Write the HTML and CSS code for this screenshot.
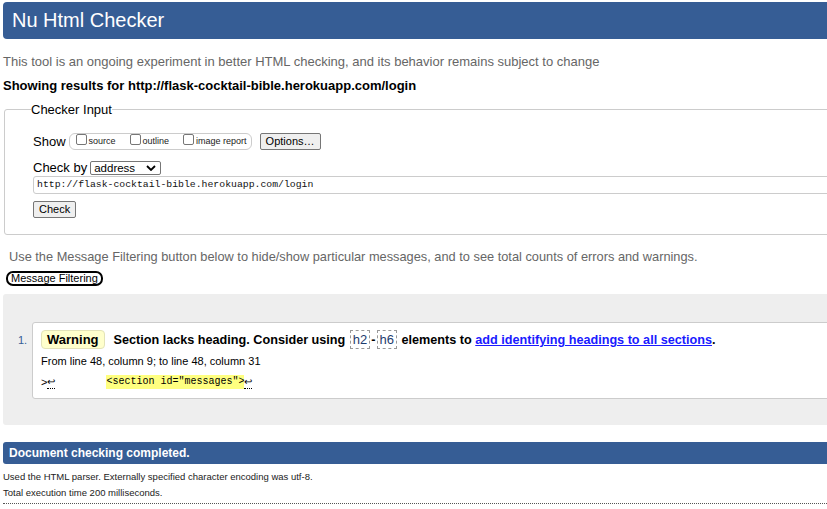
FILE: index.html
```html
<!DOCTYPE html>
<html>
<head>
<meta charset="utf-8">
<title>Nu Html Checker</title>
<link rel="stylesheet" href="styles.css">
</head>
<body>
<div class="page">
  <h1 class="title">Nu Html Checker</h1>
  <p class="intro">This tool is an ongoing experiment in better HTML checking, and its behavior remains subject to change</p>
  <p class="showing">Showing results for http://flask-cocktail-bible.herokuapp.com/login</p>

  <fieldset class="checker">
    <legend>Checker Input</legend>
    <div class="row show-row">
      <span class="lbl">Show</span>
      <span class="pill">
        <label class="opt"><span class="cb"></span>source</label>
        <label class="opt"><span class="cb"></span>outline</label>
        <label class="opt"><span class="cb"></span>image report</label>
      </span>
      <span class="btn options">Options…</span>
    </div>
    <div class="row by-row">
      <span class="lbl">Check by</span>
      <span class="select">address
        <svg class="chev" width="10" height="6" viewBox="0 0 10 6"><path d="M1 1 L5 5 L9 1" fill="none" stroke="#000" stroke-width="1.8"/></svg>
      </span>
    </div>
    <div class="url">http://flask-cocktail-bible.herokuapp.com/login</div>
    <span class="btn check">Check</span>
  </fieldset>

  <p class="filter-note">Use the Message Filtering button below to hide/show particular messages, and to see total counts of errors and warnings.</p>
  <span class="filter-btn">Message Filtering</span>

  <div class="results">
    <ol class="msgs">
      <li class="msg">
        <span class="num">1.</span>
        <div class="box">
          <p class="headline"><span class="badge">Warning</span><span class="mtext">Section lacks heading. Consider using <code class="el">h2</code>-<code class="el">h6</code> elements to <a href="#">add identifying headings to all sections</a>.</span></p>
          <p class="loc">From line 48, column 9; to line 48, column 31</p>
          <p class="extract"><span class="ch">&gt;<span class="lf">↩</span></span><span class="gap"></span><code class="hl">&lt;section id="messages"&gt;</code><span class="lf">↩</span></p>
        </div>
      </li>
    </ol>
  </div>

  <h2 class="done">Document checking completed.</h2>
  <p class="stat first">Used the HTML parser. Externally specified character encoding was utf-8.</p>
  <p class="stat">Total execution time 200 milliseconds.</p>
  <div class="dots"></div>
</div>
</body>
</html>
```

FILE: styles.css
```css
html, body {
  margin: 0;
  padding: 0;
  overflow: hidden;
  background: #fff;
}
body {
  font-family: "Liberation Sans", Arial, sans-serif;
  color: #000;
}
.page {
  width: 880px;
  padding-left: 3px;
}
.title {
  margin: 2px 0 0 0;
  height: 37px;
  line-height: 37px;
  padding-left: 9px;
  background: #365d95;
  color: #fff;
  font-size: 20px;
  font-weight: normal;
  border-radius: 4px 0 0 4px;
}
.intro {
  margin: 14px 0 0 0;
  font-size: 13px;
  line-height: 17px;
  color: #666;
}
.showing {
  margin: 7px 0 0 0;
  font-size: 13px;
  line-height: 17px;
  font-weight: bold;
}
.checker {
  margin: 7px 0 0 1px;
  padding: 14px 0 16px 28px;
  border: 1px solid #ccc;
  border-radius: 3px;
  font-size: 13px;
}
.checker legend {
  padding: 0;
  margin-left: -2px;
  font-size: 13px;
  line-height: 17px;
}
.row {
  display: flex;
  align-items: center;
}
.show-row {
  height: 18px;
}
.lbl {
  font-size: 13px;
}
.pill {
  display: inline-flex;
  align-items: center;
  margin-left: 3px;
  height: 15px;
  padding: 0 4px 0 6px;
  border: 1px solid #ccc;
  border-radius: 6px;
}
.opt {
  display: inline-flex;
  align-items: center;
  font-size: 9px;
  color: #222;
}
.opt + .opt { margin-left: 14px; }
.cb {
  display: inline-block;
  width: 9px;
  height: 9px;
  border: 1px solid #767676;
  border-radius: 2px;
  margin-right: 2px;
  margin-top: -3px;
}
.btn {
  display: inline-block;
  background: #efefef;
  border: 1px solid #767676;
  border-radius: 2px;
  font-size: 11px;
  color: #000;
  box-sizing: border-box;
}
.options {
  margin-left: 8px;
  height: 17px;
  line-height: 15px;
  padding: 0 5px;
}
.by-row {
  margin-top: 10px;
  height: 15px;
}
.select {
  display: inline-flex;
  align-items: center;
  justify-content: space-between;
  box-sizing: border-box;
  width: 71px;
  height: 14px;
  margin-left: 3px;
  padding: 0 4px 0 3px;
  border: 1px solid #767676;
  border-radius: 2px;
  font-size: 11.5px;
}
.chev { display: block; }
.url {
  margin-top: 1px;
  box-sizing: border-box;
  height: 18px;
  line-height: 16px;
  padding-left: 3px;
  border: 1px solid #ccc;
  border-radius: 3px;
  font-family: "Liberation Mono", monospace;
  font-size: 9.8px;
  color: #111;
}
.check {
  margin-top: 7px;
  height: 17px;
  line-height: 15px;
  padding: 0 5px;
}
.filter-note {
  margin: 14px 0 0 6px;
  font-size: 12.8px;
  line-height: 16px;
  color: #666;
}
.filter-btn {
  display: inline-block;
  margin: 6px 0 0 3px;
  box-sizing: border-box;
  height: 15px;
  line-height: 11px;
  padding: 0 3px;
  border: 2px solid #000;
  border-radius: 7px;
  font-size: 11px;
}
.results {
  margin-top: 8px;
  height: 131px;
  background: #eee;
  border-radius: 3px 0 0 3px;
  padding-top: 28px;
  box-sizing: border-box;
}
.msgs {
  list-style: none;
  margin: 0;
  padding: 0;
}
.msg {
  display: flex;
  align-items: flex-start;
}
.num {
  width: 29px;
  padding-left: 15px;
  box-sizing: border-box;
  font-size: 11px;
  color: #365d95;
  padding-top: 12px;
}
.box {
  flex: 1;
  box-sizing: border-box;
  height: 77px;
  background: #fff;
  border: 1px solid #ccc;
  border-radius: 3px 0 0 3px;
  padding: 7px 0 0 8px;
}
.box p { margin: 0; }
.headline {
  display: flex;
  align-items: center;
  font-size: 12.65px;
  font-weight: bold;
  height: 19px;
}
.badge {
  box-sizing: border-box;
  height: 19px;
  line-height: 17px;
  padding: 0 5px;
  background: #ffffcc;
  border: 1px solid #e3e3b8;
  border-radius: 4px;
  font-size: 13px;
}
.mtext { margin-left: 9px; }
.el {
  display: inline-block;
  font-family: "Liberation Sans", Arial, sans-serif;
  font-weight: normal;
  font-size: 13px;
  color: #1e3c6e;
  border: 1px dashed #999;
  padding: 1px 2px;
  line-height: 15px;
  margin: 0 1px;
}
.mtext a {
  color: #1a1aff;
  text-decoration: underline;
}
.loc {
  margin-top: 5px !important;
  font-size: 11px;
  line-height: 14px;
}
.extract {
  margin-top: 7px !important;
  display: flex;
  align-items: center;
  font-size: 11px;
  line-height: 14px;
}
.ch { display: inline-flex; }
.lf {
  border-bottom: 1px dotted #000;
  font-size: 10px;
  line-height: 13px;
}
.gap { width: 51px; }
.hl {
  background: #ffff80;
  font-family: "Liberation Mono", monospace;
  font-size: 10px;
  line-height: 14px;
}
.done {
  margin: 17px 0 0 0;
  height: 22px;
  line-height: 22px;
  padding-left: 6px;
  background: #365d95;
  color: #fff;
  font-size: 12px;
  font-weight: bold;
  border-radius: 3px 0 0 3px;
}
.stat {
  margin: 4px 0 0 0;
  font-size: 9.5px;
  line-height: 12px;
  color: #222;
}
.stat.first { margin-top: 7px; }
.dots {
  margin-top: 4px;
  border-top: 1px dotted #555;
}
```
